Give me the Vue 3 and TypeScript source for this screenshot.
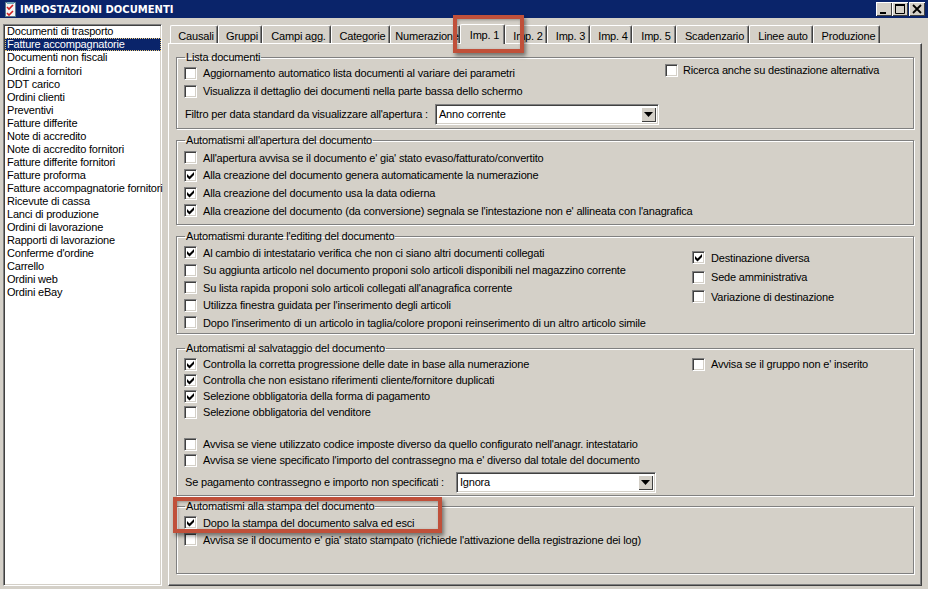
<script setup lang="ts">
type Row = { label: string; on?: boolean; spacer?: boolean };
type Group = { title: string; cls: string; rows: Row[]; side: Row[]; select?: { label: string; value: string } };

const docs: string[] = [
  "Documenti di trasporto", "Fatture accompagnatorie", "Documenti non fiscali", "Ordini a fornitori", "DDT carico",
  "Ordini clienti", "Preventivi", "Fatture differite", "Note di accredito", "Note di accredito fornitori",
  "Fatture differite fornitori", "Fatture proforma", "Fatture accompagnatorie fornitori", "Ricevute di cassa",
  "Lanci di produzione", "Ordini di lavorazione", "Rapporti di lavorazione", "Conferme d'ordine", "Carrello",
  "Ordini web", "Ordini eBay",
];

const tabs = [
  { label: "Causali", w: 48 }, { label: "Gruppi", w: 44 }, { label: "Campi agg.", w: 69 }, { label: "Categorie", w: 59 },
  { label: "Numerazione", w: 70 }, { label: "Imp. 1", w: 45, active: true }, { label: "Imp. 2", w: 42 }, { label: "Imp. 3", w: 43 },
  { label: "Imp. 4", w: 42 }, { label: "Imp. 5", w: 44 }, { label: "Scadenzario", w: 73 }, { label: "Linee auto", w: 64 },
  { label: "Produzione", w: 67 },
];

const groups: Group[] = [
  {
    title: "Lista documenti", cls: "g1",
    rows: [
      { label: "Aggiornamento automatico lista documenti al variare dei parametri" },
      { label: "Visualizza il dettaglio dei documenti nella parte bassa dello schermo" },
    ],
    side: [{ label: "Ricerca anche su destinazione alternativa" }],
    select: { label: "Filtro per data standard da visualizzare all'apertura :", value: "Anno corrente" },
  },
  {
    title: "Automatismi all'apertura del documento", cls: "g2",
    rows: [
      { label: "All'apertura avvisa se il documento e' gia' stato evaso/fatturato/convertito" },
      { label: "Alla creazione del documento genera automaticamente la numerazione", on: true },
      { label: "Alla creazione del documento usa la data odierna", on: true },
      { label: "Alla creazione del documento (da conversione) segnala se l'intestazione non e' allineata con l'anagrafica", on: true },
    ],
    side: [],
  },
  {
    title: "Automatismi durante l'editing del documento", cls: "g3",
    rows: [
      { label: "Al cambio di intestatario verifica che non ci siano altri documenti collegati", on: true },
      { label: "Su aggiunta articolo nel documento proponi solo articoli disponibili nel magazzino corrente" },
      { label: "Su lista rapida proponi solo articoli collegati all'anagrafica corrente" },
      { label: "Utilizza finestra guidata per l'inserimento degli articoli" },
      { label: "Dopo l'inserimento di un articolo in taglia/colore proponi reinserimento di un altro articolo simile" },
    ],
    side: [
      { label: "Destinazione diversa", on: true },
      { label: "Sede amministrativa" },
      { label: "Variazione di destinazione" },
    ],
  },
  {
    title: "Automatismi al salvataggio del documento", cls: "g4",
    rows: [
      { label: "Controlla la corretta progressione delle date in base alla numerazione", on: true },
      { label: "Controlla che non esistano riferimenti cliente/fornitore duplicati", on: true },
      { label: "Selezione obbligatoria della forma di pagamento", on: true },
      { label: "Selezione obbligatoria del venditore" },
      { label: "", spacer: true },
      { label: "Avvisa se viene utilizzato codice imposte diverso da quello configurato nell'anagr. intestatario" },
      { label: "Avvisa se viene specificato l'importo del contrassegno ma e' diverso dal totale del documento" },
    ],
    side: [{ label: "Avvisa se il gruppo non e' inserito" }],
    select: { label: "Se pagamento contrassegno e importo non specificati :", value: "Ignora" },
  },
  {
    title: "Automatismi alla stampa del documento", cls: "g5",
    rows: [
      { label: "Dopo la stampa del documento salva ed esci", on: true },
      { label: "Avvisa se il documento e' gia' stato stampato (richiede l'attivazione della registrazione dei log)" },
    ],
    side: [],
  },
];
</script>

<template>
  <div class="win">
    <header class="titlebar">
      <svg class="appicon" width="13" height="15" viewBox="0 0 13 15">
        <rect x="1.5" y="0.5" width="10" height="14" fill="#f4f4f4" stroke="#5a7a8a" />
        <rect x="3" y="0" width="7" height="2" fill="#6fa7b8" />
        <path d="M3 5l2 2 4-4M3 11l2 2 4-4" fill="none" stroke="#d02020" stroke-width="1.6" />
      </svg>
      <span class="title">IMPOSTAZIONI DOCUMENTI</span>
      <div class="winbtns">
        <button class="wb"><svg width="16" height="14" viewBox="0 0 16 14"><rect x="4" y="10" width="6" height="2" fill="#000" /></svg></button>
        <button class="wb"><svg width="16" height="14" viewBox="0 0 16 14"><path d="M3.5 2.5h9v9h-9z" fill="none" stroke="#000" /><rect x="3" y="2" width="10" height="2" fill="#000" /></svg></button>
        <button class="wb close"><svg width="16" height="14" viewBox="0 0 16 14"><path d="M4 3l8 8M12 3l-8 8" stroke="#000" stroke-width="1.8" /></svg></button>
      </div>
    </header>

    <div class="body">
      <ul class="list">
        <li v-for="d in docs" :key="d" :class="{ sel: d === 'Fatture accompagnatorie' }">{{ d }}</li>
      </ul>

      <section class="tabs">
        <nav class="tabstrip">
          <div v-for="t in tabs" :key="t.label" class="tab" :class="{ active: t.active }" :style="{ width: t.w + 'px' }">{{ t.label }}</div>
        </nav>
        <div class="panel">
          <fieldset v-for="g in groups" :key="g.title" class="group" :class="g.cls">
            <legend>{{ g.title }}</legend>
            <div class="cols">
              <div class="main">
                <template v-for="(r, i) in g.rows" :key="i">
                  <div v-if="r.spacer" class="spacer"></div>
                  <label v-else class="row">
                    <span class="cb">
                      <svg v-if="r.on" width="9" height="9" viewBox="0 0 9 9"><path d="M1 3L3.500 5.500 8 1v3L3.500 8.500 1 6z" fill="#000" /></svg>
                    </span>
                    <span class="txt">{{ r.label }}</span>
                  </label>
                </template>
              </div>
              <div v-if="g.side.length" class="side">
                <label v-for="s in g.side" :key="s.label" class="row">
                  <span class="cb">
                    <svg v-if="s.on" width="9" height="9" viewBox="0 0 9 9"><path d="M1 3L3.500 5.500 8 1v3L3.500 8.500 1 6z" fill="#000" /></svg>
                  </span>
                  <span class="txt">{{ s.label }}</span>
                </label>
              </div>
            </div>
            <div v-if="g.select" class="selrow">
              <span class="txt">{{ g.select.label }}</span>
              <div class="combo">
                <span class="val">{{ g.select.value }}</span>
                <span class="arrow"><svg width="9" height="5" viewBox="0 0 9 5"><path d="M0 0h9L4.500 5z" fill="#000" /></svg></span>
              </div>
            </div>
          </fieldset>
        </div>
      </section>
    </div>

    <div class="mark m1"></div>
    <div class="mark m2"></div>
  </div>
</template>

<style>
html, body { margin: 0; padding: 0; background: #d4d0c8; }
</style>

<style scoped>
.win {
  position: relative;
  width: 928px;
  height: 589px;
  overflow: hidden;
  background: #d4d0c8;
  font-family: "Liberation Sans", Arial, sans-serif;
  font-size: 11px;
  letter-spacing: -0.18px;
  color: #000;
  display: flex;
  flex-direction: column;
}
.titlebar {
  height: 18px;
  background: #0a246a;
  display: flex;
  align-items: center;
  padding: 0 3px 0 4px;
  flex: none;
}
.appicon { flex: none; }
.title {
  margin-left: 3px;
  color: #fff;
  font-family: "DejaVu Sans", sans-serif;
  font-weight: bold;
  font-size: 10px;
  letter-spacing: 0;
  white-space: nowrap;
}
.winbtns { margin-left: auto; display: flex; }
.wb {
  width: 16px;
  height: 14px;
  padding: 0;
  border: none;
  background: #d4d0c8;
  box-shadow: inset 1px 1px 0 #fff, inset -1px -1px 0 #404040;
  display: block;
}
.wb svg { display: block; }
.wb.close { margin-left: 1px; }
.body {
  flex: 1;
  display: flex;
  padding: 6px 6px 3px 3px;
  gap: 6px;
  min-height: 0;
}
.list {
  width: 159px;
  flex: none;
  margin: 0;
  padding: 0;
  list-style: none;
  background: #fff;
  box-sizing: border-box;
  border-top: 1px solid #808080;
  border-left: 1px solid #808080;
  border-right: 1px solid #fff;
  border-bottom: 1px solid #fff;
  box-shadow: inset 1px 1px 0 #404040, inset -1px -1px 0 #d4d0c8;
  letter-spacing: -0.2px;
}
.list li {
  height: 13.05px;
  line-height: 13px;
  padding: 0 1px 0 2px;
  margin-left: 1px;
  white-space: nowrap;
  box-sizing: border-box;
}
.list li:first-child { margin-top: 0.4px; }
.list li.sel {
  background: #0a246a;
  color: #fff;
  outline: 1px dotted #e8c878;
  outline-offset: -1px;
}
.tabs { flex: 1; display: flex; flex-direction: column; min-width: 0; }
.tabstrip {
  height: 19px;
  display: flex;
  align-items: flex-end;
  padding-left: 2px;
  flex: none;
}
.tab {
  height: 18px;
  line-height: 20px;
  padding-left: 4px;
  text-align: center;
  box-sizing: border-box;
  white-space: nowrap;
  border-top: 1px solid #fff;
  border-left: 1px solid #fff;
  border-right: 1px solid #404040;
  border-radius: 2px 2px 0 0;
  box-shadow: inset -1px 0 0 #808080;
}
.tab.active {
  height: 20px;
  line-height: 20px;
  position: relative;
  z-index: 1;
  background: #d4d0c8;
  margin-bottom: -1px;
}
.panel {
  flex: 1;
  box-sizing: border-box;
  border-top: 1px solid #fff;
  border-left: 1px solid #fff;
  border-right: 1px solid #404040;
  border-bottom: 1px solid #404040;
  box-shadow: inset -1px -1px 0 #808080;
  padding: 7px 7px 0 7px;
  display: flex;
  flex-direction: column;
  align-items: stretch;
}
.group {
  margin: 0;
  box-sizing: border-box;
  border: 1px solid #808080;
  padding: 0 0 0 7px;
  box-shadow: 1px 1px 0 #fff, inset 1px 1px 0 #fff;
  min-width: 0;
}
.group legend {
  padding: 0 1px;
  margin-left: 1px;
  line-height: 13px;
  white-space: nowrap;
}
.g1 { height: 78px; margin-bottom: 5px; }
.g2 { height: 91px; margin-bottom: 5px; }
.g3 { height: 104px; margin-bottom: 8px; }
.g4 { height: 154px; margin-bottom: 4px; }
.g5 { height: 74px; }
.cols { display: flex; }
.main { flex: none; width: 508px; display: flex; flex-direction: column; }
.side { flex: 1; display: flex; flex-direction: column; }
.row {
  display: flex;
  align-items: center;
  white-space: nowrap;
}
.cb {
  width: 13px;
  height: 13px;
  flex: none;
  box-sizing: border-box;
  background: #fff;
  border-top: 1px solid #808080;
  border-left: 1px solid #808080;
  border-right: 1px solid #fff;
  border-bottom: 1px solid #fff;
  box-shadow: inset 1px 1px 0 #404040, inset -1px -1px 0 #d4d0c8;
  display: flex;
  align-items: center;
  justify-content: center;
}
.cb svg { display: block; }
.row .txt { margin-left: 6px; }
.selrow > .txt { margin-left: 1px; }
.g1 .cols { margin-top: -3px; }
.g1 .main { width: 481px; padding-top: 3px; }
.g1 .row { height: 18px; }
.g1 .side .txt { margin-left: 5px; }
.g2 .main { padding-top: 2px; }
.g2 .row { height: 17.67px; }
.g3 .main { padding-top: 1px; }
.g3 .row { height: 17.5px; }
.g3 .side { padding-top: 6px; gap: 2px; }
.g4 .main { padding-top: 1px; }
.g4 .row { height: 16px; }
.g4 .side { padding-top: 1px; }
.g4 .spacer { height: 16px; }
.g5 .main { padding-top: 1px; }
.g5 .row { height: 17px; }
.selrow {
  display: flex;
  align-items: center;
  white-space: nowrap;
  height: 22px;
  margin-top: 3px;
}
.combo {
  height: 21px;
  box-sizing: border-box;
  background: #fff;
  border-top: 1px solid #808080;
  border-left: 1px solid #808080;
  border-right: 1px solid #fff;
  border-bottom: 1px solid #fff;
  box-shadow: inset 1px 1px 0 #404040, inset -1px -1px 0 #d4d0c8;
  display: flex;
  align-items: center;
  justify-content: space-between;
  padding: 2px;
}
.g1 .combo { width: 224px; margin-left: 7px; }
.g4 .combo { width: 200px; margin-left: 12px; }
.val { padding-left: 1px; }
.arrow {
  width: 15px;
  height: 15px;
  background: #d4d0c8;
  box-shadow: inset 1px 1px 0 #fff, inset -1px -1px 0 #404040;
  display: flex;
  align-items: center;
  justify-content: center;
}
.arrow svg { display: block; }
.mark {
  position: absolute;
  box-sizing: border-box;
  border: 4px solid #c0503a;
  box-shadow: 2px 3px 4px rgba(0, 0, 0, 0.45), inset 1px 1px 3px rgba(0, 0, 0, 0.3);
  pointer-events: none;
  z-index: 5;
}
.m1 { left: 453px; top: 15px; width: 71px; height: 38px; }
.m2 { left: 173px; top: 497px; width: 269px; height: 36px; }
</style>
